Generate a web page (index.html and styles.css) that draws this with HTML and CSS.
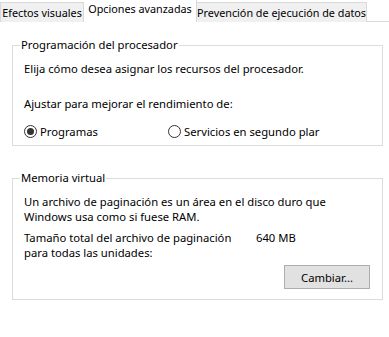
FILE: index.html
```html
<!DOCTYPE html>
<html lang="es">
<head>
<meta charset="utf-8">
<link rel="stylesheet" href="styles.css">
</head>
<body>
<div class="tabs">
  <div class="tab t1">Efectos visuales</div>
  <div class="tab t2 active">Opciones avanzadas</div>
  <div class="tab t3">Prevención de ejecución de datos</div>
</div>
<div class="page">
  <fieldset class="group g1">
    <legend>Programación del procesador</legend>
    <p class="line first">Elija cómo desea asignar los recursos del procesador.</p>
    <p class="line adjust">Ajustar para mejorar el rendimiento de:</p>
    <div class="radios">
      <label class="radio"><span class="dot checked"></span>Programas</label>
      <label class="radio r2"><span class="dot"></span>Servicios en segundo plar</label>
    </div>
  </fieldset>
  <fieldset class="group g2">
    <legend>Memoria virtual</legend>
    <p class="line first">Un archivo de paginación es un área en el disco duro que<br>Windows usa como si fuese RAM.</p>
    <div class="size">
      <p class="line">Tamaño total del archivo de paginación<br>para todas las unidades:</p>
      <span class="mb">640 MB</span>
    </div>
    <div class="btnrow"><button class="btn">Cambiar...</button></div>
  </fieldset>
</div>
</body>
</html>
```

FILE: styles.css
```css
html, body { margin: 0; padding: 0; background: #fff; }
body {
  font-family: "Noto Sans", "Liberation Sans", sans-serif;
  font-size: 11.25px;
  color: #000;
  width: 389px;
  height: 337px;
  overflow: hidden;
}
.tabs {
  display: flex;
  height: 22px;
  border-bottom: 1px solid #d9d9d9;
  box-sizing: border-box;
  align-items: flex-end;
}
.tab {
  background: #f0f0f0;
  border: 1px solid #d9d9d9;
  border-bottom: none;
  height: 20px;
  line-height: 19px;
  box-sizing: border-box;
  white-space: nowrap;
  text-align: center;
  margin-bottom: -1px;
  flex-shrink: 0;
  font-size: 10.8px;
}
.t1 { width: 84px; }
.t2 { width: 113px; }
.t3 { width: 170px; border-left: none; }
.tab.active {
  background: #fff;
  height: 23px;
  line-height: 18px;
  border-left: none;
}
.page { padding: 15px 6px 0 12px; }
.group {
  margin: 0;
  border: 1px solid #dcdcdc;
  padding: 0 11px 0 11px;
  min-width: 0;
  box-sizing: border-box;
}
.group legend { padding: 0 1px; margin-left: -4px; line-height: 16px; }
.g1 { height: 109px; }
.g2 { margin-top: 24px; height: 130px; }
.line { margin: 0; line-height: 15px; white-space: nowrap; }
.g1 .first { margin-top: 8px; }
.adjust { margin-top: 20px; }
.radios { display: flex; margin-top: 13px; }
.radio { display: flex; align-items: center; gap: 3px; width: 144px; white-space: nowrap; }
.dot {
  flex-shrink: 0;
  width: 11px; height: 11px; border: 1px solid #333; border-radius: 50%;
  display: inline-flex; align-items: center; justify-content: center; background: #fff;
}
.dot.checked::after { content: ""; width: 7px; height: 7px; border-radius: 50%; background: #333; }
.g2 .first { margin-top: 8px; }
.size { display: flex; margin-top: 6px; }
.size .line { width: 232px; }
.mb { line-height: 15px; }
.btnrow { display: flex; justify-content: flex-end; margin-top: 5px; }
.btn {
  font: inherit;
  color: #000;
  width: 86px; height: 24px;
  background: #e1e1e1;
  border: 1px solid #adadad;
  border-radius: 0;
  padding: 0;
  margin-right: 1px;
}
```
